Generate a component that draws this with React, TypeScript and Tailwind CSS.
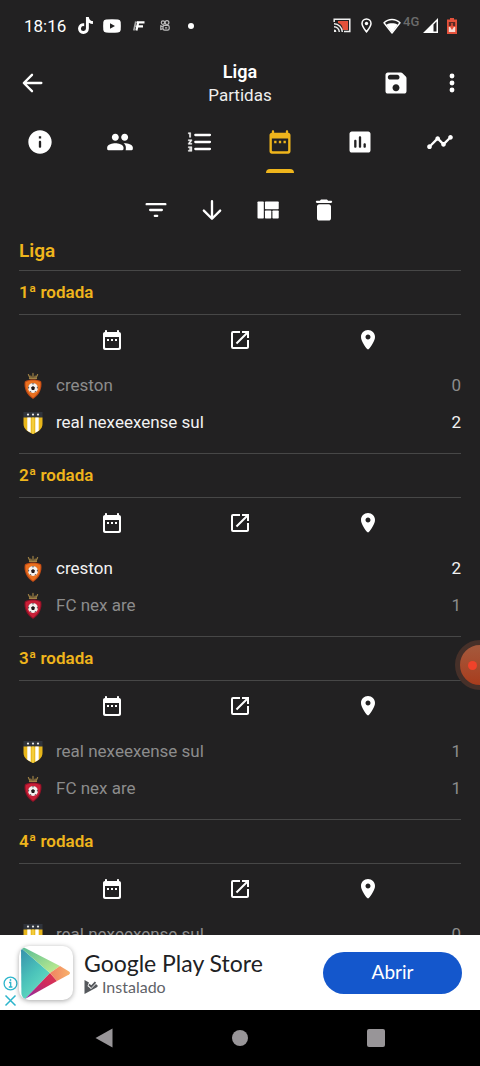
import type { ReactNode } from 'react';
import { FaTiktok } from 'react-icons/fa6';
import { MdOpenInNew, MdTimeline } from 'react-icons/md';

type IconProps = { className?: string };

function Glyph({ className = 'size-7', children }: { className?: string; children: ReactNode }) {
  return (
    <svg viewBox="0 0 24 24" fill="currentColor" className={className} aria-hidden="true">
      {children}
    </svg>
  );
}

function Stroke({ d, width = 2, className }: { d: string; width?: number; className?: string }) {
  return (
    <Glyph className={className}>
      <path d={d} fill="none" stroke="currentColor" strokeWidth={width} strokeLinecap="round" strokeLinejoin="round" />
    </Glyph>
  );
}

const CalendarIcon = ({ className }: IconProps) => (
  <Glyph className={className}>
    <path
      fillRule="evenodd"
      d="M19 4V3c0-.55-.45-1-1-1s-1 .45-1 1v1H7V3c0-.55-.45-1-1-1s-1 .45-1 1v1c-1.1 0-2 .9-2 2v14c0 1.1.9 2 2 2h14c1.1 0 2-.9 2-2V6c0-1.1-.9-2-2-2zm0 15c0 .55-.45 1-1 1H6c-.55 0-1-.45-1-1V9h14v10z"
    />
    <path d="M7 11h2v2H7zM11 11h2v2h-2zM15 11h2v2h-2z" />
  </Glyph>
);

const SaveIcon = () => (
  <Glyph>
    <path d="M17.59 3.59c-.38-.38-.89-.59-1.42-.59H5c-1.11 0-2 .9-2 2v14c0 1.1.9 2 2 2h14c1.1 0 2-.9 2-2V7.83c0-.53-.21-1.04-.59-1.41l-2.82-2.83zM12 19c-1.66 0-3-1.34-3-3s1.34-3 3-3 3 1.34 3 3-1.34 3-3 3zm1-10H7c-1.1 0-2-.9-2-2s.9-2 2-2h6c1.1 0 2 .9 2 2s-.9 2-2 2z" />
  </Glyph>
);

const MoreIcon = () => (
  <Glyph>
    <circle cx="12" cy="6" r="2.1" />
    <circle cx="12" cy="12" r="2.1" />
    <circle cx="12" cy="18" r="2.1" />
  </Glyph>
);

const InfoIcon = () => (
  <Glyph>
    <path d="M12 2C6.48 2 2 6.48 2 12s4.48 10 10 10 10-4.48 10-10S17.52 2 12 2zm0 15c-.55 0-1-.45-1-1v-4c0-.55.45-1 1-1s1 .45 1 1v4c0 .55-.45 1-1 1zm1-8h-2V7h2v2z" />
  </Glyph>
);

const PeopleIcon = () => (
  <Glyph>
    <path d="M16 11c1.66 0 2.99-1.34 2.99-3S17.66 5 16 5s-3 1.34-3 3 1.34 3 3 3zm-8 0c1.66 0 2.99-1.34 2.99-3S9.66 5 8 5 5 6.34 5 8s1.34 3 3 3zm0 2c-2.33 0-7 1.17-7 3.5V18c0 .55.45 1 1 1h12c.55 0 1-.45 1-1v-1.5c0-2.33-4.67-3.5-7-3.5zm8 0c-.29 0-.62.02-.97.05.02.01.03.03.04.04 1.14.83 1.93 1.94 1.93 3.41V18c0 .35-.07.69-.18 1H22c.55 0 1-.45 1-1v-1.5c0-2.33-4.67-3.5-7-3.5z" />
  </Glyph>
);

const NumberedIcon = () => (
  <Glyph>
    <path
      d="M2 17h2v.5H3v1h1v.5H2v1h3v-4H2v1zm1-9h1V4H2v1h1v3zm-1 3h1.8L2 13.1v.9h3v-1H3.2L5 10.9V10H2v1z"
      stroke="currentColor"
      strokeWidth=".4"
    />
    <path d="M8 6h12.500M8 12h12.500M8 18h12.500" stroke="currentColor" strokeWidth="2" strokeLinecap="round" />
  </Glyph>
);

const ChartIcon = () => (
  <Glyph>
    <path d="M19 3H5c-1.1 0-2 .9-2 2v14c0 1.1.9 2 2 2h14c1.1 0 2-.9 2-2V5c0-1.1-.9-2-2-2zM8 17c-.55 0-1-.45-1-1v-5c0-.55.45-1 1-1s1 .45 1 1v5c0 .55-.45 1-1 1zm4 0c-.55 0-1-.45-1-1V8c0-.55.45-1 1-1s1 .45 1 1v8c0 .55-.45 1-1 1zm4 0c-.55 0-1-.45-1-1v-2c0-.55.45-1 1-1s1 .45 1 1v2c0 .55-.45 1-1 1z" />
  </Glyph>
);

const QuiltIcon = () => (
  <Glyph>
    <rect x="3" y="4.8" width="5.4" height="14.4" rx=".6" />
    <rect x="9.4" y="4.8" width="11.8" height="6.6" rx=".6" />
    <rect x="9.4" y="12.5" width="5.4" height="6.7" rx=".6" />
    <rect x="15.8" y="12.5" width="5.4" height="6.7" rx=".6" />
  </Glyph>
);

const DeleteIcon = () => (
  <Glyph>
    <path d="M6 19c0 1.1.9 2 2 2h8c1.1 0 2-.9 2-2V9c0-1.1-.9-2-2-2H8c-1.1 0-2 .9-2 2v10zM18 4h-2.5l-.71-.71c-.18-.18-.44-.29-.7-.29H9.91c-.26 0-.52.11-.7.29L8.5 4H6c-.55 0-1 .45-1 1s.45 1 1 1h12c.55 0 1-.45 1-1s-.45-1-1-1z" />
  </Glyph>
);

const PlaceIcon = () => (
  <Glyph className="size-6">
    <path d="M12 2C8.13 2 5 5.13 5 9c0 4.17 4.42 9.92 6.24 12.11.4.48 1.13.48 1.53 0C14.58 18.92 19 13.17 19 9c0-3.87-3.13-7-7-7zm0 9.5c-1.38 0-2.5-1.12-2.5-2.5s1.12-2.5 2.5-2.5 2.5 1.12 2.5 2.5-1.12 2.5-2.5 2.5z" />
  </Glyph>
);

function CrownCrest({ tone }: { tone: 'orange' | 'red' }) {
  const [light, dark] = tone === 'orange' ? ['#e9701f', '#c04a15'] : ['#c91f37', '#8e1226'];
  return (
    <svg viewBox="0 0 20 28" className="h-7 w-5" aria-hidden="true">
      <path d="M6.500 6.400H13.500M6.800 5.600L5.400 2.600M13.200 5.600L14.600 2.600M10 5.600V1.400M8.200 5.200L7.800 4M11.800 5.200L12.200 4" fill="none" stroke="#a08245" strokeWidth="1.200" strokeLinecap="round" />
      <path d="M10 7.500C13 7.500 16 8 18.200 9.500C19.500 16 16.500 23 10 27C3.500 23 .5 16 1.800 9.500C4 8 7 7.500 10 7.500Z" fill={dark} />
      <path d="M10 8.400C13 8.400 15.500 9 17.300 10.200C18 16 15.500 22 10 25.700C5 22 2 16 2.700 10.200C4.500 9 7 8.400 10 8.400Z" fill={light} />
      <circle cx="10" cy="16" r="4.900" fill="#f4f1ee" />
      <path d="M10 14L12 15.500L11.200 17.900H8.800L8 15.500Z" fill="#22191a" />
      <path d="M8.300 11.400H11.700L10 12.500ZM14.600 14.200L14.800 17L13.700 15.600ZM5.400 14.200L5.200 17L6.300 15.600ZM11.400 20.500L13.300 19.300L12.200 18.900ZM8.600 20.500L6.700 19.300L7.800 18.900Z" fill="#33292a" />
    </svg>
  );
}

function StripedCrest() {
  return (
    <svg viewBox="0 0 20 22" className="h-[22px] w-5" aria-hidden="true">
      <path d="M.5 0H19.500V6H.5Z" fill="#30343c" />
      <path d="M.5 5.500H19.500V12C19.500 17 15 20 10 22C5 20 .5 17 .5 12Z" fill="#e7b61b" />
      <path d="M4.300 5.500H7.700V20.700L4.300 18.700ZM12.300 5.500H15.700V18.700L12.300 20.700Z" fill="#fff" />
      <path d="M8.800 5.500H11.200V21.300L10 22L8.800 21.300Z" fill="#f3cd3d" />
      <circle cx="5" cy="2.600" r="1.100" fill="#e8e8e8" />
      <circle cx="10" cy="2.600" r="1.100" fill="#e8e8e8" />
      <circle cx="15" cy="2.600" r="1.100" fill="#e8e8e8" />
    </svg>
  );
}

function StatusBar() {
  return (
    <div className="flex h-[52px] shrink-0 items-center justify-between pr-[23px] pb-px pl-6 text-white">
      <div className="flex items-center">
        <span className="w-[53px] text-[17px] leading-5">18:16</span>
        <FaTiktok className="size-[17px]" />
        <svg viewBox="0 0 18 14" className="ml-[9px] h-[14px] w-[18px]" aria-hidden="true">
          <path fillRule="evenodd" fill="#fff" d="M3 .5Q9 0 15 .5Q17.500 .7 17.700 3Q18 7 17.700 11Q17.500 13.300 15 13.500Q9 14 3 13.500Q.5 13.300 .3 11Q0 7 .3 3Q.5 .7 3 .5ZM7 4.200V9.800L12 7Z" />
        </svg>
        <svg viewBox="0 0 13 12" className="ml-3 h-3 w-[13px]" aria-hidden="true">
          <path d="M1.800 2.300H5M1.200 6.300H4M2.800 1.500L.8 10.500" stroke="#aaa" strokeWidth="1.600" fill="none" />
          <path d="M4.600 2.300H11.500M4 6.300H10M5.400 1.300L3.400 10.500" stroke="#fff" strokeWidth="2.200" fill="none" />
        </svg>
        <svg viewBox="0 0 10 11" className="ml-[14px] h-[11px] w-[10px]" fill="none" stroke="#bdbdbd" strokeWidth="1.200" aria-hidden="true">
          <circle cx="3" cy="2.600" r="1.700" />
          <circle cx="7" cy="2.600" r="1.900" />
          <rect x="3" y="5.300" width="6.200" height="4.900" rx="1.600" />
          <path d="M3 6.500L.8 5.800V9.500L3 8.800M5 7.800H7.200" />
        </svg>
        <span className="ml-[18px] size-[6px] rounded-full bg-white" />
      </div>
      <div className="flex items-center">
        <svg viewBox="0 0 18 15" className="h-[15px] w-[18px]" fill="none" aria-hidden="true">
          <path d="M5 3H15V12H10Q9.500 6 5 5Z" fill="#e4513b" />
          <path d="M1.200 4V1.200H16.800V13.600H11" stroke="#eee" strokeWidth="1.500" />
          <path d="M1 5.700A8.300 8.300 0 0 1 9.300 14M1 8.700A5.300 5.300 0 0 1 6.300 14" stroke="#eee" strokeWidth="1.400" />
          <path d="M1 11.600A2.400 2.400 0 0 1 3.400 14H1Z" fill="#eee" />
        </svg>
        <svg viewBox="0 0 11 15" className="ml-[10px] h-[15px] w-[11px]" fill="none" aria-hidden="true">
          <path d="M5.500 .9C2.900 .9 1 2.900 1 5.400C1 8.200 3.600 11.200 5.500 13.800C7.400 11.200 10 8.200 10 5.400C10 2.900 8.100 .9 5.500 .9Z" stroke="#fff" strokeWidth="1.500" />
          <circle cx="5.500" cy="5.500" r="1.700" fill="#fff" />
        </svg>
        <svg viewBox="0 0 18 16" className="ml-[11px] h-4 w-[18px]" fill="none" aria-hidden="true">
          <path d="M1 4.800C5.500 .3 12.500 .3 17 4.800L9 15Z" stroke="#fff" strokeWidth="1.400" strokeLinejoin="round" />
          <path d="M3.400 6.700C6.500 4.800 11.500 4.800 14.600 6.700L9 14.500Z" fill="#fff" />
        </svg>
        <span className="ml-[2px] w-5 pb-2 text-[13px] leading-4 font-medium text-[#6b6b6b]">4G</span>
        <svg viewBox="0 0 15 15" className="h-[15px] w-[15px]" aria-hidden="true">
          <path d="M0 15L15 0V15ZM10.500 6.500V13.500H13.500V3.500Z" fill="#fff" fillRule="evenodd" />
        </svg>
        <svg viewBox="0 0 10 16" className="ml-[9px] h-4 w-[10px]" aria-hidden="true">
          <path d="M3 0H7V1.500H10V16H0V1.500H3Z" fill="#e4513b" />
          <path d="M1.800 9H8.200V14H1.800Z" fill="#f6dcd6" />
          <path d="M1.800 4H8.200V8H1.800Z" fill="#5b2a25" />
          <path d="M5 5V11M3.500 8L5 10.500L6.500 8" stroke="#e4513b" strokeWidth="1.500" fill="none" />
        </svg>
      </div>
    </div>
  );
}

function Header() {
  return (
    <header className="grid h-[62px] shrink-0 grid-cols-[1fr_auto_1fr] items-center px-[14px] text-white">
      <button type="button" aria-label="Voltar" className="flex size-9 items-center justify-center">
        <Stroke d="M20 12H5.500M12 5L5 12L12 19" />
      </button>
      <div className="text-center">
        <h1 className="text-[18px] leading-6 font-semibold">Liga</h1>
        <p className="text-[17px] leading-[22px] text-[#eeeeee]">Partidas</p>
      </div>
      <div className="flex items-center justify-end gap-5">
        <button type="button" aria-label="Salvar" className="flex size-9 items-center justify-center">
          <SaveIcon />
        </button>
        <button type="button" aria-label="Mais opções" className="-mr-1 flex size-9 items-center justify-center">
          <MoreIcon />
        </button>
      </div>
    </header>
  );
}

const tabs = [
  { label: 'Informações', icon: <InfoIcon /> },
  { label: 'Participantes', icon: <PeopleIcon /> },
  { label: 'Classificação', icon: <NumberedIcon /> },
  { label: 'Partidas', icon: <CalendarIcon /> },
  { label: 'Estatísticas', icon: <ChartIcon /> },
  { label: 'Evolução', icon: <MdTimeline className="size-7" /> },
];

function Tabs() {
  return (
    <nav className="grid h-[60px] shrink-0 grid-cols-6 pb-px" role="tablist">
      {tabs.map((tab) => {
        const active = tab.label === 'Partidas';
        return (
          <button
            key={tab.label}
            type="button"
            role="tab"
            aria-selected={active}
            aria-label={tab.label}
            className={`flex flex-col items-center justify-between pt-[14px] ${active ? 'text-[#efb51c]' : 'text-white'}`}
          >
            {tab.icon}
            {active && <span className="h-1 w-7 rounded-t-full bg-[#efb51c]" />}
          </button>
        );
      })}
    </nav>
  );
}

const tools = [
  { label: 'Filtrar', icon: <Stroke d="M4 7H20M7 12H17M11 17H13" /> },
  { label: 'Ordenar', icon: <Stroke d="M12 4.500V19M5 12.500L12 19.500L19 12.500" /> },
  { label: 'Visualização', icon: <QuiltIcon /> },
  { label: 'Excluir', icon: <DeleteIcon /> },
];

type Team = { name: string; score: number; crest: 'orange' | 'red' | 'striped'; winner?: boolean };

const rounds: { title: string; teams: Team[] }[] = [
  {
    title: '1ª rodada',
    teams: [
      { name: 'creston', score: 0, crest: 'orange' },
      { name: 'real nexeexense sul', score: 2, crest: 'striped', winner: true },
    ],
  },
  {
    title: '2ª rodada',
    teams: [
      { name: 'creston', score: 2, crest: 'orange', winner: true },
      { name: 'FC nex are', score: 1, crest: 'red' },
    ],
  },
  {
    title: '3ª rodada',
    teams: [
      { name: 'real nexeexense sul', score: 1, crest: 'striped' },
      { name: 'FC nex are', score: 1, crest: 'red' },
    ],
  },
  {
    title: '4ª rodada',
    teams: [{ name: 'real nexeexense sul', score: 0, crest: 'striped' }],
  },
];

function TeamRow({ team }: { team: Team }) {
  return (
    <li className={`flex h-[37px] items-center pl-1 text-[17px] ${team.winner ? 'text-[#f2f2f2]' : 'text-[#8c8c8c]'}`}>
      <span className="flex w-[33px] items-center">
        {team.crest === 'striped' ? <StripedCrest /> : <CrownCrest tone={team.crest} />}
      </span>
      <span className="flex-1">{team.name}</span>
      <span>{team.score}</span>
    </li>
  );
}

function Round({ title, teams }: { title: string; teams: Team[] }) {
  return (
    <section className="border-t border-[#474747] pb-3">
      <h3 className="flex h-[43px] items-center text-[17px] font-semibold text-[#efb51c]">{title}</h3>
      <div className="mb-[2px] grid h-[51px] grid-cols-3 border-t border-[#474747] px-[29px] text-white">
        <button type="button" aria-label="Data" className="flex items-center justify-center">
          <CalendarIcon className="size-6" />
        </button>
        <button type="button" aria-label="Abrir partida" className="flex items-center justify-center">
          <MdOpenInNew className="size-6" />
        </button>
        <button type="button" aria-label="Local" className="flex items-center justify-center">
          <PlaceIcon />
        </button>
      </div>
      <ul>
        {teams.map((team) => (
          <TeamRow key={team.name} team={team} />
        ))}
      </ul>
    </section>
  );
}

function PlayLogo() {
  return (
    <svg viewBox="0 0 54 54" className="size-[54px]" aria-hidden="true">
      <defs>
        <linearGradient id="teal" x1="0" y1="0" x2=".6" y2="1">
          <stop offset="0" stopColor="#368fab" />
          <stop offset=".55" stopColor="#4bc3ba" />
          <stop offset="1" stopColor="#69e0c2" />
        </linearGradient>
        <linearGradient id="green" x1="0" y1="0" x2="1" y2="1">
          <stop offset="0" stopColor="#56bb94" />
          <stop offset="1" stopColor="#c6f08f" />
        </linearGradient>
        <linearGradient id="pink" x1="0" y1="1" x2="1" y2="0">
          <stop offset="0" stopColor="#8a2fa6" />
          <stop offset=".6" stopColor="#cf2a5e" />
          <stop offset="1" stopColor="#dc3b4e" />
        </linearGradient>
        <linearGradient id="amber" x1="0" y1="0" x2="1" y2="0">
          <stop offset="0" stopColor="#ef8261" />
          <stop offset="1" stopColor="#f8b26c" />
        </linearGradient>
      </defs>
      <path d="M2 2L31 27L6 53Q2.500 51 2.400 47Z" fill="url(#teal)" />
      <path d="M2 2Q4 .8 7 2.500L41 20L31 27Z" fill="url(#green)" />
      <path d="M31 27L38 35L6 53Z" fill="url(#pink)" />
      <path d="M41 20L50 25.500Q52 27 50 28.500L38 35L31 27Z" fill="url(#amber)" />
    </svg>
  );
}

function AdBanner() {
  return (
    <aside className="flex h-[75px] shrink-0 items-center bg-white pr-[18px] font-['Lato','Roboto',sans-serif]">
      <div className="flex w-[19px] flex-col items-start gap-[3px] self-end pb-[3px] pl-[3px] text-[#2cb5cc]">
        <svg viewBox="0 0 15 15" className="size-[15px] max-w-none" fill="none" stroke="currentColor" aria-hidden="true">
          <circle cx="7.500" cy="7.500" r="6.400" strokeWidth="1.300" />
          <path d="M6 6.500H7.700V10.800M5.800 11H9.400" strokeWidth="1.300" />
          <circle cx="7.500" cy="4" r=".6" fill="currentColor" />
        </svg>
        <svg viewBox="0 0 15 13" className="h-[13px] w-[15px] max-w-none" fill="none" stroke="currentColor" strokeWidth="1.500" aria-hidden="true">
          <path d="M2.500 1.500L12.500 11.500M12.500 1.500L2.500 11.500" />
        </svg>
      </div>
      <div className="size-[54px] overflow-hidden rounded-[10px] bg-white shadow-[0_1px_5px_rgba(0,0,0,0.35)]">
        <PlayLogo />
      </div>
      <div className="flex-1 pl-[11px]">
        <p className="text-[23px] leading-7 text-[#202124]">Google Play Store</p>
        <p className="flex items-center gap-1 text-[16px] leading-5 text-[#5f6368]">
          <svg viewBox="0 0 14 14" className="size-[14px]" aria-hidden="true">
            <path d="M.5 0L5 2.500L3.500 6L7 9L12 4L14 6L12.500 7.500L.5 14Z" fill="#55585c" />
            <path d="M5 4.500L7.200 6.700L11.500 2.200" fill="none" stroke="#55585c" strokeWidth="1.800" />
          </svg>
          Instalado
        </p>
      </div>
      <button type="button" className="h-[42px] w-[139px] rounded-full bg-[#1457cc] text-[19px] text-white">
        Abrir
      </button>
    </aside>
  );
}

function SystemNav() {
  return (
    <nav className="grid h-14 shrink-0 grid-cols-3 bg-black px-9 text-[#989598]">
      <button type="button" aria-label="Voltar ao anterior" className="flex items-center justify-center">
        <svg viewBox="0 0 18 20" className="h-5 w-[18px]" fill="currentColor" aria-hidden="true">
          <path d="M17.500 .5V19.500L.5 10Z" />
        </svg>
      </button>
      <button type="button" aria-label="Início" className="flex items-center justify-center">
        <span className="size-4 rounded-full bg-current" />
      </button>
      <button type="button" aria-label="Recentes" className="flex items-center justify-center">
        <span className="size-[18px] rounded-xs bg-current" />
      </button>
    </nav>
  );
}

export default function App() {
  return (
    <div className="relative flex h-dvh flex-col overflow-hidden bg-[#222122] font-['Roboto','Liberation_Sans',sans-serif]">
      <StatusBar />
      <Header />
      <Tabs />
      <main className="min-h-0 flex-1 overflow-y-auto px-[19px] [scrollbar-width:none]">
        <div className="flex h-[66px] items-center justify-center gap-7 pt-[6px] text-white">
          {tools.map((tool) => (
            <button key={tool.label} type="button" aria-label={tool.label}>
              {tool.icon}
            </button>
          ))}
        </div>
        <h2 className="flex h-[30px] items-center pb-2 text-[19px] leading-6 font-semibold text-[#efb51c]">Liga</h2>
        {rounds.map((round) => (
          <Round key={round.title} title={round.title} teams={round.teams} />
        ))}
      </main>
      <AdBanner />
      <SystemNav />
      <button
        type="button"
        aria-label="Gravação de tela"
        className="absolute top-[640px] -right-[25px] flex size-[50px] items-center rounded-full border-[5px] border-[#463029] bg-linear-to-b from-[#a4593c] to-[#a83c1c] pl-2"
      >
        <span className="size-[9px] rounded-full bg-[#f0422a]" />
      </button>
    </div>
  );
}
